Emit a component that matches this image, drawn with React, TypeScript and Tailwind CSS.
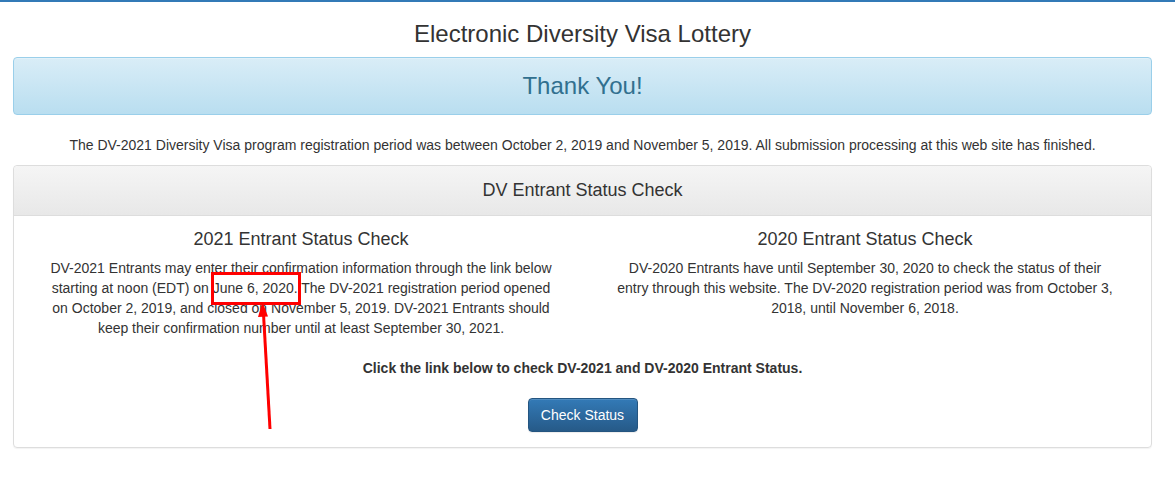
import React from 'react';

const font = { fontFamily: '"Liberation Sans", Arial, Helvetica, sans-serif' };

export default function App() {
  return (
    <div className="relative min-h-[485px] bg-white text-[#333] border-t-2 border-[#337ab7]" style={font}>
      <div className="pl-[13px] pr-[23px]">
        <h1 className="text-center text-[24px] leading-[26px] pt-[19px] pb-[10px]">Electronic Diversity Visa Lottery</h1>

        <div className="h-[58px] rounded-[4px] border border-[#9acfea] bg-gradient-to-b from-[#d9edf7] to-[#b9def0] flex items-center justify-center shadow-[inset_0_1px_0_rgba(255,255,255,0.25)]">
          <span className="text-[24px] text-[#31708f]">Thank You!</span>
        </div>

        <p className="text-center text-[14px] leading-[20px] mt-[20px] mb-[10px]">
          The DV-2021 Diversity Visa program registration period was between October 2, 2019 and November 5, 2019. All submission processing at this web site has finished.
        </p>

        <div className="rounded-[4px] border border-[#ddd] shadow-[0_1px_1px_rgba(0,0,0,0.05)]">
          <div className="h-[50px] border-b border-[#ddd] rounded-t-[4px] bg-gradient-to-b from-[#f5f5f5] to-[#e8e8e8] flex items-center justify-center">
            <span className="text-[18px] text-[#333]">DV Entrant Status Check</span>
          </div>
          <div className="pt-[13px] pb-[15px]">
            <div className="grid grid-cols-2 pl-[5px] pr-[4px]">
              <div className="px-[30px] text-center">
                <h3 className="text-[18px] leading-[20px] mb-[9px]">2021 Entrant Status Check</h3>
                <p className="text-[14px] leading-[20px]">
                  DV-2021 Entrants may enter their confirmation information through the link below starting at noon (EDT) on June 6, 2020. The DV-2021 registration period opened on October 2, 2019, and closed on November 5, 2019. DV-2021 Entrants should keep their confirmation number until at least September 30, 2021.
                </p>
              </div>
              <div className="px-[30px] text-center">
                <h3 className="text-[18px] leading-[20px] mb-[9px]">2020 Entrant Status Check</h3>
                <p className="text-[14px] leading-[20px]">
                  DV-2020 Entrants have until September 30, 2020 to check the status of their entry through this website. The DV-2020 registration period was from October 3, 2018, until November 6, 2018.
                </p>
              </div>
            </div>
            <p className="text-center text-[14px] leading-[20px] font-bold mt-[20px]">
              Click the link below to check DV-2021 and DV-2020 Entrant Status.
            </p>
            <div className="flex justify-center mt-[20px]">
              <button className="w-[110px] h-[34px] rounded-[4px] border border-[#245580] bg-gradient-to-b from-[#337ab7] to-[#265a88] text-white text-[14px] shadow-[inset_0_1px_0_rgba(255,255,255,0.15),0_1px_1px_rgba(0,0,0,0.075)]">
                Check Status
              </button>
            </div>
          </div>
        </div>
      </div>

      <svg className="absolute left-0 top-0 pointer-events-none" width="1175" height="485">
        <rect x="212.5" y="271.5" width="87" height="30" fill="none" stroke="#ff0000" strokeWidth="3" />
        <line x1="270" y1="427" x2="263.5" y2="312" stroke="#ff0000" strokeWidth="3" />
        <polygon points="262.5,300 258,315 268,314.5" fill="#ff0000" />
      </svg>
    </div>
  );
}
